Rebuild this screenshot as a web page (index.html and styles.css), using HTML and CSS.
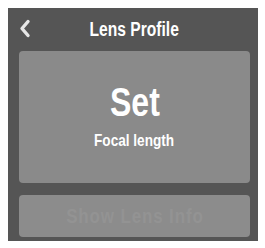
FILE: index.html
```html
<!DOCTYPE html>
<html lang="en">
<head>
  <meta charset="UTF-8" />
  <title>Lens Profile</title>
  <link rel="stylesheet" href="styles.css">
</head>
<body>
  <div class="screen">
    <div class="header">
      <span class="back">
        <svg width="12" height="19" viewBox="0 0 12 19">
          <path d="M9 2.5 L3 9.5 L9 16.5" fill="none" stroke="#e6e6e6" stroke-width="3.4" stroke-linecap="round" stroke-linejoin="round"/>
        </svg>
      </span>
      <h1>Lens Profile</h1>
    </div>
    <div class="btn main">
      <div class="big">Set</div>
      <div class="sub">Focal length</div>
    </div>
    <div class="btn faded">
      <span class="ghost">Show Lens Info</span>
    </div>
  </div>
</body>
</html>
```

FILE: styles.css
```css
body {
  margin: 0;
  background: #fff;
  font-family: "Liberation Sans", Arial, sans-serif;
}

.screen {
  margin: 8px;
  width: 250px;
  height: 233px;
  background: #555;
  box-sizing: border-box;
  padding: 0 8px 4px 11px;
  display: flex;
  flex-direction: column;
}

.header {
  height: 43px;
  position: relative;
  display: flex;
  align-items: center;
  justify-content: center;
}

.back {
  position: absolute;
  left: 0;
  top: 11px;
}

h1 {
  margin: 0;
  color: #fff;
  font-size: 20px;
  font-weight: bold;
  transform: scaleX(0.78);
}

.btn {
  background: #8a8a8a;
  border-radius: 4px;
  display: flex;
  flex-direction: column;
  align-items: center;
  justify-content: center;
  color: #fff;
  font-weight: bold;
}

.main {
  height: 132px;
  padding-bottom: 2px;
  box-sizing: border-box;
}

.big {
  font-size: 41px;
  line-height: 42px;
  transform: scaleX(0.78);
}

.sub {
  font-size: 17px;
  margin-top: 8px;
  transform: scaleX(0.8);
}

.faded {
  margin-top: 12px;
  height: 42px;
  background: #8c8c8c;
}

.ghost {
  color: #939393;
  font-size: 20px;
  letter-spacing: 1px;
  transform: scaleX(0.85);
}
```
